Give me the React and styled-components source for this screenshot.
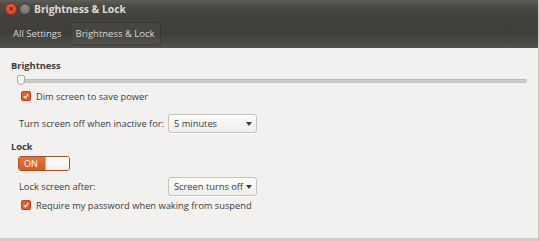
import React from 'react';
import styled, { createGlobalStyle } from 'styled-components';

const GlobalStyle = createGlobalStyle`
  html, body { margin: 0; padding: 0; background: #f2f1f0; }
  body { font-family: "Open Sans", "DejaVu Sans", sans-serif; }
`;

const Window = styled.div`
  width: 540px;
  height: 241px;
  display: flex;
  flex-direction: column;
  background: #f2f1f0;
  box-sizing: border-box;
  border-right: 2px solid #cfcdc9;
  border-bottom: 3px solid #cfcdc9;
  overflow: hidden;
`;

const Header = styled.div`
  height: 48px;
  background: linear-gradient(#5e5d58 0px, #4b4a45 6px, #42413c 16px, #403f3b 34px, #4f4e49 46px, #55544f 48px);
  display: flex;
  flex-direction: column;
`;

const TitleBar = styled.div`
  height: 18px;
  display: flex;
  align-items: center;
  padding-left: 5px;
  gap: 2px;
`;

const WinButton = styled.span`
  width: 10px;
  height: 10px;
  border-radius: 50%;
  background: ${p => p.close ? 'radial-gradient(circle at 50% 40%, #f0603a, #d5401e)' : 'radial-gradient(circle at 50% 40%, #8e8c86, #6c6a65)'};
  border: 1px solid ${p => p.close ? '#9c2d12' : '#3a3935'};
  display: flex;
  align-items: center;
  justify-content: center;
  color: #5a1405;
  font-size: 8px;
  line-height: 1;
  font-weight: bold;
`;

const Title = styled.span`
  margin-left: 1px;
  color: #dfdbd2;
  font-size: 10.3px;
  font-weight: bold;
`;

const Toolbar = styled.div`
  flex: 1;
  display: flex;
  align-items: center;
  padding: 0 4px 0 8px;
  gap: 3px;
`;

const ToolButton = styled.div`
  color: #dcd9d2;
  font-size: 9.5px;
  white-space: nowrap;
  padding: 4px ${p => p.active ? '5px' : '4px'};
  border-radius: 3px;
  border: 1px solid ${p => p.active ? 'rgba(0,0,0,0.22)' : 'transparent'};
  background: ${p => p.active ? 'rgba(255,255,255,0.03)' : 'transparent'};
`;

const Content = styled.div`
  flex: 1;
  padding: 11px 11px 0 11px;
  display: flex;
  flex-direction: column;
  color: #3c3c3c;
  font-size: 9.3px;
  white-space: nowrap;
`;

const SectionTitle = styled.div`
  font-weight: bold;
  font-size: 9.3px;
  color: #3c3c3c;
  line-height: 14px;
  margin-top: ${p => p.top || 0}px;
`;

const SliderRow = styled.div`
  position: relative;
  height: 14px;
  margin: 1px 0 0 6px;
  width: 510px;
`;

const Track = styled.div`
  position: absolute;
  left: 0;
  right: 0;
  top: 5px;
  height: 3px;
  border-radius: 2px;
  background: linear-gradient(#d3d1cd, #c2c0bb);
  border-top: 1px solid #bbb9b4;
`;

const Knob = styled.div`
  position: absolute;
  left: 0;
  top: 1px;
  width: 6px;
  height: 8px;
  background: #fbfbfa;
  border: 1px solid #a8a6a1;
  border-radius: 2px 2px 4px 4px;
`;

const CheckRow = styled.label`
  display: flex;
  align-items: center;
  gap: 5px;
  margin-left: 10px;
  margin-top: ${p => p.top || 0}px;
  height: 14px;
`;

const Check = styled.span`
  width: 8px;
  height: 8px;
  border-radius: 2px;
  background: #e4612f;
  border: 1px solid #b8451b;
  display: flex;
  align-items: center;
  justify-content: center;
`;

const FieldRow = styled.div`
  display: flex;
  align-items: center;
  margin-left: 8px;
  margin-top: ${p => p.top || 0}px;
  height: 21px;
`;

const FieldLabel = styled.span`
  width: 149px;
`;

const Combo = styled.div`
  width: 89px;
  height: 19px;
  box-sizing: border-box;
  display: flex;
  align-items: center;
  justify-content: space-between;
  padding: 0 4px 0 5px;
  border: 1px solid #c5c3be;
  border-radius: 3px;
  background: linear-gradient(#fdfdfc, #efeeec);
  box-shadow: 0 1px 0 rgba(255,255,255,0.8);
  color: #3c3c3c;
`;

const Arrow = styled.span`
  width: 0;
  height: 0;
  border-left: 3px solid transparent;
  border-right: 3px solid transparent;
  border-top: 4px solid #3c3c3c;
`;

const Switch = styled.div`
  margin: 2px 0 0 7px;
  width: 50px;
  height: 13px;
  display: flex;
  border: 1px solid #a4501f;
  border-radius: 3px;
  overflow: hidden;
`;

const SwitchOn = styled.span`
  width: 26px;
  background: linear-gradient(#e9703e, #d85a27);
  color: #fff;
  font-size: 9px;
  display: flex;
  align-items: center;
  padding-left: 5px;
  box-sizing: border-box;
`;

const SwitchKnob = styled.span`
  flex: 1;
  background: linear-gradient(#ffffff, #f0efed);
  border-left: 1px solid #b9b7b2;
`;

const CheckMark = () => (
  <svg width="6" height="6" viewBox="0 0 6 6">
    <path d="M0.8 3.2 L2.4 4.8 L5.2 1.2" stroke="#fff" strokeWidth="1.2" fill="none" />
  </svg>
);

const App = () => (
  <>
    <GlobalStyle />
    <Window>
      <Header>
        <TitleBar>
          <WinButton close>×</WinButton>
          <WinButton />
          <Title>Brightness &amp; Lock</Title>
        </TitleBar>
        <Toolbar>
          <ToolButton>All Settings</ToolButton>
          <ToolButton active>Brightness &amp; Lock</ToolButton>
        </Toolbar>
      </Header>
      <Content>
        <SectionTitle>Brightness</SectionTitle>
        <SliderRow>
          <Track />
          <Knob />
        </SliderRow>
        <CheckRow top={1}>
          <Check><CheckMark /></Check>
          Dim screen to save power
        </CheckRow>
        <FieldRow top={10}>
          <FieldLabel>Turn screen off when inactive for:</FieldLabel>
          <Combo>5 minutes<Arrow /></Combo>
        </FieldRow>
        <SectionTitle top={6}>Lock</SectionTitle>
        <Switch>
          <SwitchOn>ON</SwitchOn>
          <SwitchKnob />
        </Switch>
        <FieldRow top={5}>
          <FieldLabel>Lock screen after:</FieldLabel>
          <Combo>Screen turns off<Arrow /></Combo>
        </FieldRow>
        <CheckRow top={1}>
          <Check><CheckMark /></Check>
          Require my password when waking from suspend
        </CheckRow>
      </Content>
    </Window>
  </>
);

export default App;
